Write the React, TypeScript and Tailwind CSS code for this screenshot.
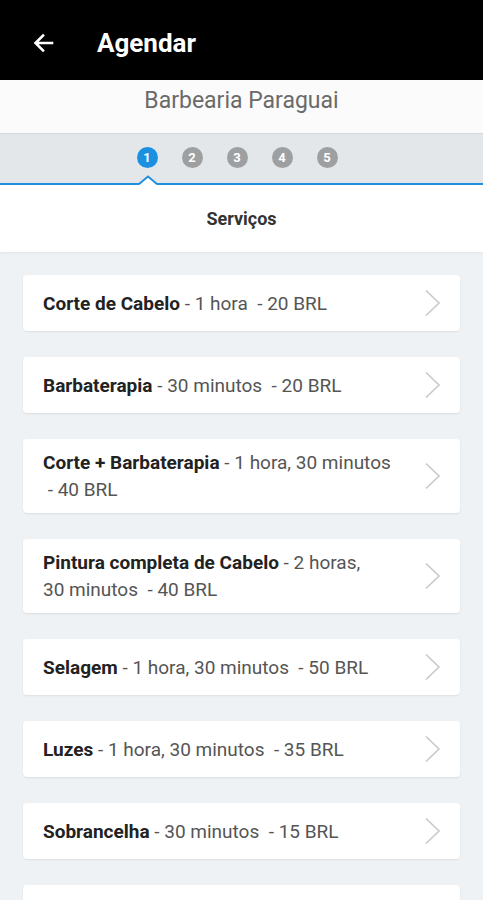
import React from "react";

type Item = { name: string; lines: string[] };

const items: Item[] = [
  { name: "Corte de Cabelo", lines: [" - 1 hora  - 20 BRL"] },
  { name: "Barbaterapia", lines: [" - 30 minutos  - 20 BRL"] },
  { name: "Corte + Barbaterapia", lines: [" - 1 hora, 30 minutos", " - 40 BRL"] },
  { name: "Pintura completa de Cabelo", lines: [" - 2 horas,", "30 minutos  - 40 BRL"] },
  { name: "Selagem", lines: [" - 1 hora, 30 minutos  - 50 BRL"] },
  { name: "Luzes", lines: [" - 1 hora, 30 minutos  - 35 BRL"] },
  { name: "Sobrancelha", lines: [" - 30 minutos  - 15 BRL"] },
];

function Chevron() {
  return (
    <svg width="18" height="28" viewBox="0 0 18 28" className="shrink-0">
      <polyline points="2,1.5 15,14 2,26.5" fill="none" stroke="#c9c9c9" strokeWidth="1.6" />
    </svg>
  );
}

function Card({ item }: { item: Item }) {
  return (
    <div className="flex min-h-[56px] items-center justify-between rounded-[4px] bg-white py-[10px] pl-5 pr-[18px] shadow-[0_1px_2px_rgba(0,0,0,0.08)]">
      <div className="whitespace-pre text-[19px] leading-[27px] text-[#555]">
        <span className="font-bold text-[#222]">{item.name}</span>
        {item.lines[0]}
        {item.lines.slice(1).map((l, i) => (
          <React.Fragment key={i}>
            <br />
            {l}
          </React.Fragment>
        ))}
      </div>
      <Chevron />
    </div>
  );
}

export default function App() {
  return (
    <div className="flex h-[900px] w-[483px] flex-col overflow-hidden bg-[#eff2f5] font-['Roboto',sans-serif]">
      <div className="flex h-[80px] shrink-0 items-center bg-black">
        <svg width="24" height="24" viewBox="0 0 24 24" className="ml-[32px] mt-[6px]">
          <path d="M20 12H4.5M11 4.5L3.5 12L11 19.5" fill="none" stroke="#fff" strokeWidth="2.6" strokeLinecap="square" />
        </svg>
        <span className="ml-[41px] mt-[6px] text-[26px] font-bold text-white">Agendar</span>
      </div>
      <div className="flex h-[54px] shrink-0 items-start justify-center border-b border-[#d5d8db] bg-[#fbfbfb] pt-[4px]">
        <span className="text-[23px] text-[#6a6a6a]">Barbearia Paraguai</span>
      </div>
      <div className="relative flex h-[51px] shrink-0 items-start justify-center gap-[24px] border-b-2 border-[#1e8fdc] bg-[#e4e7ea] pr-[9px] pt-[13px]">
        {[1, 2, 3, 4, 5].map((n) => (
          <div
            key={n}
            className={
              n === 1
                ? "flex h-[21px] w-[21px] items-center justify-center rounded-full bg-[#1b8fe0] text-[13px] font-bold text-white"
                : "flex h-[21px] w-[21px] items-center justify-center rounded-full bg-[#9d9fa1] text-[13px] font-bold text-white"
            }
          >
            {n}
          </div>
        ))}
        <svg width="18" height="10" viewBox="0 0 18 10" className="absolute bottom-[-2px] left-[139px]">
          <polygon points="0,10 9,2 18,10" fill="#fff" />
          <polyline points="0,9 9,1.5 18,9" fill="none" stroke="#1e8fdc" strokeWidth="2" />
        </svg>
      </div>
      <div className="flex h-[67px] shrink-0 items-center justify-center bg-white shadow-[0_1px_3px_rgba(0,0,0,0.05)]">
        <span className="text-[18px] font-bold text-[#333]">Serviços</span>
      </div>
      <div className="flex flex-col gap-[26px] px-[23px] pt-[23px]">
        {items.map((it) => (
          <Card key={it.name} item={it} />
        ))}
        <div className="h-[56px] shrink-0 rounded-[4px] bg-white shadow-[0_1px_2px_rgba(0,0,0,0.08)]" />
      </div>
    </div>
  );
}
